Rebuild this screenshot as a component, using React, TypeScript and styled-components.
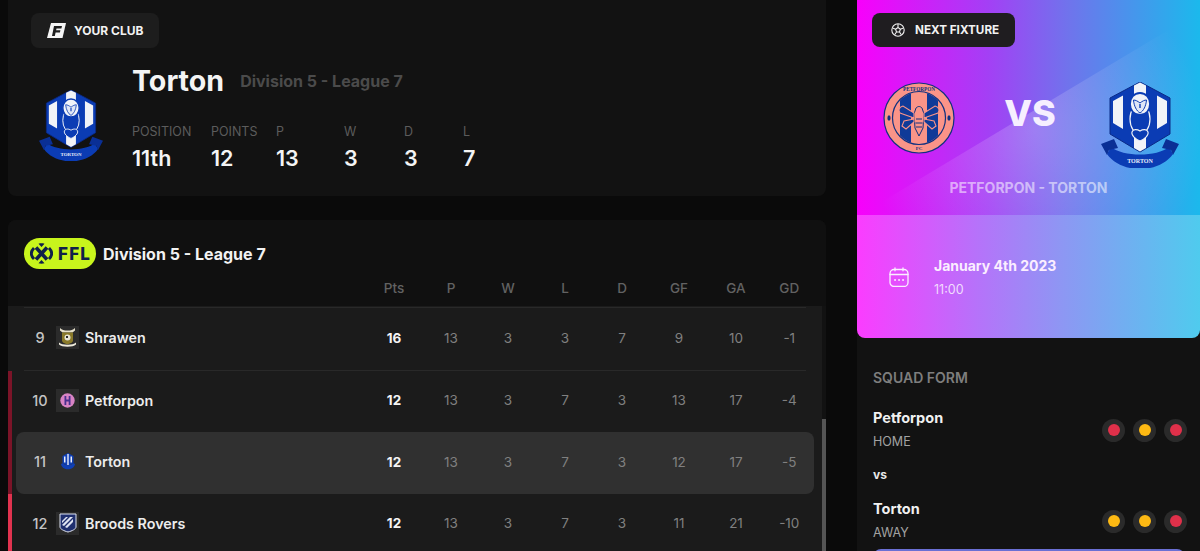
import React from "react";
import styled, { createGlobalStyle } from "styled-components";

const Global = createGlobalStyle`
  html, body { margin: 0; padding: 0; background: #0a0a0a; overflow: hidden; }
  * { box-sizing: border-box; }
  body { font-family: "Inter", "Liberation Sans", sans-serif; }
`;

const Page = styled.div`
  display: flex;
  gap: 31px;
  width: 1200px;
  height: 551px;
  padding-left: 8px;
  overflow: hidden;
  color: #fff;
`;
const Main = styled.main`
  width: 818px;
  display: flex;
  flex-direction: column;
  gap: 24px;
`;
const Side = styled.aside`
  width: 343px;
  display: flex;
  flex-direction: column;
  background: #121212;
`;

const ClubCard = styled.section`
  height: 196px;
  flex: none;
  background: #121212;
  border-radius: 0 0 8px 8px;
  padding: 13px 23px 0;
`;
const Chip = styled.div<{ $dark?: boolean }>`
  display: inline-flex;
  align-items: center;
  height: ${(p) => (p.$dark ? 34 : 35)}px;
  gap: ${(p) => (p.$dark ? 10 : 8)}px;
  padding: ${(p) => (p.$dark ? "0 16px 0 19px" : "0 16px 0 16px")};
  border-radius: 8px;
  background: ${(p) => (p.$dark ? "#1f1d20" : "#1d1d1d")};
  font-size: ${(p) => (p.$dark ? 11.7 : 12)}px;
  font-weight: 700;
  color: #f2f2f2;
`;
const ClubBody = styled.div`
  display: flex;
  margin-top: 15px;
`;
const CrestSlot = styled.div`
  width: 101px;
  padding: 27px 0 0 8px;
  flex: none;
`;
const TitleRow = styled.div`
  display: flex;
  align-items: center;
  gap: 16px;
`;
const ClubName = styled.h1`
  margin: 0;
  font-size: 28.6px;
  line-height: 36px;
  font-weight: 700;
  color: #f4f4f4;
`;
const ClubLeague = styled.span`
  font-size: 16px;
  font-weight: 700;
  color: #4b4b4b;
`;
const Stats = styled.div`
  display: grid;
  grid-template-columns: 79px 65px 68px 60px 59px 40px;
  margin-top: 25px;
`;
const StatLabel = styled.div`
  font-size: 12.5px;
  line-height: 16px;
  color: #5c5c5c;
`;
const StatValue = styled.div`
  margin-top: 4px;
  font-size: 21.5px;
  line-height: 28px;
  font-weight: 600;
  color: #f4f4f4;
`;

const TableCard = styled.section`
  flex: 1;
  min-height: 0;
  background: #121212;
  border-radius: 8px 8px 0 0;
  overflow: hidden;
  display: flex;
  flex-direction: column;
`;
const TableHead = styled.header`
  height: 86px;
  flex: none;
  background: #101010;
  display: flex;
  flex-direction: column;
  padding-top: 18px;
`;
const TitleLine = styled.div`
  display: flex;
  align-items: center;
  gap: 7px;
  padding-left: 16px;
  height: 31px;
  font-size: 16px;
  font-weight: 700;
  color: #f2f2f2;
`;
const Pill = styled.div`
  display: flex;
  align-items: center;
  gap: 5px;
  width: 72px;
  height: 31px;
  padding-left: 6px;
  border-radius: 16px;
  background: #c8f51c;
  color: #10204a;
  font-size: 17px;
  font-weight: 800;
  letter-spacing: 1.2px;
`;
const Grid = styled.div`
  display: grid;
  grid-template-columns: 32px 29px 1fr repeat(7, 57px) 49.5px;
  align-items: center;
  padding-left: 8px;
`;
const HeadGrid = styled(Grid)`
  margin: 9px 12px 0 8px;
  height: 20px;
  font-size: 13.5px;
  font-weight: 500;
  color: #626262;
`;
const Cell = styled.div<{ $strong?: boolean }>`
  text-align: center;
  font-size: 13.5px;
  font-weight: ${(p) => (p.$strong ? 700 : 400)};
  color: ${(p) => (p.$strong ? "#f4f4f4" : "#808080")};
`;
const HeadCell = styled.div`
  text-align: center;
`;
const TableFrame = styled.div`
  flex: 1;
  min-height: 0;
  display: flex;
`;
const Rows = styled.div`
  width: 814px;
  background: #1b1b1b;
  padding-top: 1px;
  overflow: hidden;
`;
const Track = styled.div`
  width: 4px;
  padding-top: 113px;
`;
const Thumb = styled.div`
  height: 140px;
  background: #555;
`;
const Divider = styled.div`
  height: 1px;
  margin: 0 16px;
  background: #292929;
`;
const Zone = styled.div<{ $color: string }>`
  border-left: 4px solid ${(p) => p.$color};
  padding: 0 8px 0 4px;
`;
const Row = styled(Grid)<{ $active?: boolean }>`
  height: 61.5px;
  padding-bottom: 2px;
  border-radius: 8px;
  background: ${(p) => (p.$active ? "#303030" : "transparent")};
`;
const Rank = styled.div`
  text-align: center;
  font-size: 14.5px;
  font-weight: 500;
  color: #c4c4c4;
`;
const LogoTile = styled.div<{ $bare?: boolean }>`
  width: 23px;
  height: 23px;
  background: ${(p) => (p.$bare ? "transparent" : "#2b2b2b")};
  display: flex;
  align-items: center;
  justify-content: center;
`;
const Team = styled.div`
  font-size: 14.3px;
  font-weight: 600;
  color: #ececec;
`;

const Hero = styled.section`
  height: 338px;
  flex: none;
  border-radius: 0 0 8px 8px;
  overflow: hidden;
  display: flex;
  flex-direction: column;
  background: #0a0a0a;
`;
const HeroTop = styled.div`
  height: 215px;
  flex: none;
  position: relative;
  padding: 13px 15px 0;
  background: linear-gradient(90deg, #f800fb 0%, #a43ff5 38%, #6f74ec 62%, #1bb9ec 100%);
`;
const Beam = styled.div`
  position: absolute;
  inset: 0;
  clip-path: polygon(0 217px, 66px 177px, 283px 47px, 343px 11px, 343px 215px);
  background: radial-gradient(circle 170px at 178px 130px, rgba(255, 255, 255, 0.2) 0%, rgba(255, 255, 255, 0.1) 50%, rgba(255, 255, 255, 0) 100%);
`;
const HeroContent = styled.div`
  position: relative;
`;
const Versus = styled.div`
  display: grid;
  grid-template-columns: 72px 1fr 78px;
  align-items: start;
  margin: 35px 6px 0 11px;
  height: 86px;
`;
const VsText = styled.div`
  text-align: center;
  font-size: 36px;
  line-height: 44px;
  font-weight: 800;
  color: #f6efff;
  padding-left: 4px;
  margin-top: 9px;
`;
const Match = styled.div`
  margin-top: 12px;
  text-align: center;
  font-size: 14px;
  line-height: 16px;
  font-weight: 700;
  color: rgba(255, 255, 255, 0.55);
`;
const HeroBottom = styled.div`
  flex: 1;
  display: flex;
  align-items: center;
  gap: 25px;
  padding: 0 0 0 32px;
  background: linear-gradient(90deg, #fb3cff 0%, #b672fa 35%, #8d97f3 60%, #4fcbee 100%);
`;
const DateTitle = styled.div`
  font-size: 14px;
  font-weight: 700;
  color: #fbeeff;
`;
const DateTime = styled.div`
  margin-top: 8px;
  font-size: 12.5px;
  color: rgba(255, 255, 255, 0.78);
`;
const FormPanel = styled.section`
  flex: 1;
  padding: 31px 15px 0 16px;
`;
const FormTitle = styled.div`
  font-size: 14px;
  line-height: 18px;
  font-weight: 600;
  color: #7e7e7e;
`;
const FormRow = styled.div`
  display: flex;
  align-items: center;
  justify-content: space-between;
  margin-top: 20px;
  height: 45px;
`;
const FormTeam = styled.div`
  font-size: 14.5px;
  line-height: 20px;
  font-weight: 700;
  color: #f0f0f0;
`;
const FormSide = styled.div`
  margin-top: 5px;
  font-size: 12.5px;
  line-height: 18px;
  color: #a2a2a2;
`;
const VsLabel = styled.div`
  margin-top: 15px;
  margin-bottom: -5px;
  font-size: 12px;
  line-height: 16px;
  font-weight: 700;
  color: #e8e8e8;
`;
const Dots = styled.div`
  display: flex;
  gap: 8px;
  margin-right: -2px;
  margin-top: 1px;
`;
const Dot = styled.div`
  width: 23px;
  height: 23px;
  border-radius: 50%;
  background: #2a2a2a;
  display: flex;
  align-items: center;
  justify-content: center;
`;
const DotCore = styled.div<{ $color: string }>`
  width: 12px;
  height: 12px;
  border-radius: 50%;
  background: ${(p) => p.$color};
`;
const CtaEdge = styled.div`
  height: 12px;
  margin-top: 6px;
  border-radius: 8px 8px 0 0;
  background: #6a6fd4;
`;

const TortonCrest = ({ w }: { w: number }) => (
  <svg width={w} height={(w * 86) / 78} viewBox="0 0 78 86" aria-hidden="true">
    <path d="M39 0 69 16v36L39 70 9 52V16z" fill="#0b3cb4" stroke="#0a2a86" strokeWidth="1" />
    <path d="M12 19l10-5.500V47l-10-6zM66 19l-10-5.500V47l10-6z" fill="#f1f3f8" />
    <path d="M33 3.500 39 .5l6 3V66l-6 3.500-6-3.500z" fill="#f1f3f8" />
    <ellipse cx="39" cy="37" rx="10" ry="15" fill="#0b3cb4" stroke="#f1f3f8" strokeWidth="1.200" />
    <path d="M29 22c0-6 4-11 10-11s10 5 10 11-4 11-10 11-10-5-10-11z" fill="#f1f3f8" stroke="#0b3cb4" strokeWidth="1.800" />
    <path d="M32.500 18c2 0 4 1 6.500 3 2.500-2 4.500-3 6.500-3-.5 6-3 11-6.500 13-3.500-2-6-7-6.500-13z" fill="#dfe6f6" stroke="#0b3cb4" strokeWidth="1" />
    <path d="M39 22v4" stroke="#0b3cb4" strokeWidth="1.400" />
    <path d="M39 59c-5-2-9-6-8-9 1-3 5-3 8-1 3-2 7-2 8 1 1 3-3 7-8 9z" fill="#0b3cb4" stroke="#f1f3f8" strokeWidth="1.100" />
    <path d="M10 65c12 10 46 10 58 0l4 7C58 92 20 92 6 72z" fill="#0b3cb4" />
    <path d="M0 62 13 57l4 9-9 2-2 5zM78 62 65 57l-4 9 9 2 2 5z" fill="#0a2f95" />
    <text x="39" y="81" textAnchor="middle" fontSize="6" fontWeight="700" fill="#e8ecf8" fontFamily="Liberation Serif, serif">TORTON</text>
  </svg>
);

const PetCrest = () => (
  <svg width="72" height="72" viewBox="0 0 72 72" aria-hidden="true">
    <circle cx="36" cy="36" r="35" fill="#fa9488" stroke="#11317f" strokeWidth="1.200" />
    <circle cx="36" cy="36" r="26.500" fill="#fa9488" stroke="#11317f" strokeWidth="1.200" />
    <path d="M17 18.500A26 26 0 0 1 28 11.300V60.700A26 26 0 0 1 17 53.500zM44 11.300A26 26 0 0 1 55 18.500V53.500A26 26 0 0 1 44 60.700z" fill="#0f3a98" />
    <path d="M33 26c2-2 4-2 6 0l2 6-1 14-4 8-4-8-1-14z" fill="#fa9488" stroke="#11317f" strokeWidth="1" />
    <path d="M33 37h6M32.500 41h7M33 45h6" stroke="#11317f" strokeWidth="1" />
    <path d="M31 31 20 24c-4 1-5 4-3 7l14 5zM41 31l11-7c4 1 5 4 3 7l-14 5zM31 37l-10 2-2 5 4 3 8-7zM41 37l10 2 2 5-4 3-8-7z" fill="#0f3a98" stroke="#fa9488" strokeWidth="1.100" />
    <ellipse cx="6" cy="36" rx="1.600" ry="2.800" fill="#11317f" />
    <ellipse cx="66" cy="36" rx="1.600" ry="2.800" fill="#11317f" />
    <text x="36" y="8.600" textAnchor="middle" fontSize="5.200" fontWeight="700" fill="#11317f" fontFamily="Liberation Serif, serif">PETFORPON</text>
    <text x="36" y="68" textAnchor="middle" fontSize="5" fontWeight="700" fill="#11317f" fontFamily="Liberation Serif, serif">FC</text>
  </svg>
);

const ShrawenMini = () => (
  <svg width="19" height="21" viewBox="0 0 19 21" aria-hidden="true">
    <path d="M2 1c2 2 4 2.500 7.500 2.500S15 3 17 1v2.500l-2.500 2h-10L2 3.500z" fill="#e8e2cc" />
    <path d="M4 5.500h11v8c0 2-3 3-5.500 4C7 16.500 4 15.500 4 13.500z" fill="#8a7a2a" />
    <circle cx="9.500" cy="10.500" r="3" fill="#e9e6d6" />
    <path d="M8 9h2v2H8z" fill="#2a2a2a" />
    <path d="M1 15.500c3 3 14 3 17 0v2c-3 3-14 3-17 0z" fill="#eeeadb" />
  </svg>
);
const PetMini = () => (
  <svg width="15" height="15" viewBox="0 0 15 15" aria-hidden="true">
    <circle cx="7.500" cy="7.500" r="7.200" fill="#d883c4" />
    <path d="M4.500 3h1.800v9H4.500zM8.700 3h1.800v9H8.700z" fill="#4a2f8f" />
    <path d="M5 6.500h5v2H5z" fill="#4a2f8f" />
  </svg>
);
const TortonMini = () => (
  <svg width="14" height="17" viewBox="0 0 14 17" aria-hidden="true">
    <path d="M7 0l5.500 3v7L7 13 1.500 10V3z" fill="#0f3fb5" />
    <path d="M3 3.500h1.500v6H3zM9.500 3.500H11v6H9.500zM6.300 1h1.400v11H6.300z" fill="#e8ecf8" />
    <path d="M0 11l2-1c2 3 8 3 10 0l2 1c-1 7-13 7-14 0z" fill="#0f3fb5" />
  </svg>
);
const BroodsMini = () => (
  <svg width="18" height="20" viewBox="0 0 18 20" aria-hidden="true">
    <path d="M1 1h16v13c0 2-4 4-8 5-4-1-8-3-8-5z" fill="#1f2f6f" stroke="#dfe4f2" strokeWidth="1" />
    <path d="M3 12l8-8h3L5 13zM6 14l8-8v3l-6 6zM3 8l4-4h2L3 10z" fill="#dfe4f2" />
  </svg>
);

const rows = [
  { rank: 9, team: "Shrawen", logo: <ShrawenMini />, pts: 16, v: [13, 3, 3, 7, 9, 10, -1], zone: "transparent" },
  { rank: 10, team: "Petforpon", logo: <PetMini />, pts: 12, v: [13, 3, 7, 3, 13, 17, -4], zone: "#7b1428" },
  { rank: 11, team: "Torton", logo: <TortonMini />, pts: 12, v: [13, 3, 7, 3, 12, 17, -5], zone: "#7b1428", active: true },
  { rank: 12, team: "Broods Rovers", logo: <BroodsMini />, pts: 12, v: [13, 3, 7, 3, 11, 21, -10], zone: "#e0334f" },
];

const stats = [
  ["POSITION", "11th"],
  ["POINTS", "12"],
  ["P", "13"],
  ["W", "3"],
  ["D", "3"],
  ["L", "7"],
];

const RED = "#e0304a";
const YEL = "#fdb913";

export default function App() {
  return (
    <Page>
      <Global />
      <Main>
        <ClubCard>
          <Chip>
            <svg width="19" height="15" viewBox="0 0 19 15" aria-hidden="true">
              <path d="M4 0h15l-3.500 15H0z" fill="#f4f4f4" />
              <path d="M7 3h8l-.6 2.400H9.500l-.4 1.800h4.300L12.900 9.500H8.600L7.800 13H5z" fill="#1d1d1d" />
            </svg>
            YOUR CLUB
          </Chip>
          <ClubBody>
            <CrestSlot>
              <TortonCrest w={64} />
            </CrestSlot>
            <div>
              <TitleRow>
                <ClubName>Torton</ClubName>
                <ClubLeague>Division 5 - League 7</ClubLeague>
              </TitleRow>
              <Stats>
                {stats.map(([l, v]) => (
                  <div key={l}>
                    <StatLabel>{l}</StatLabel>
                    <StatValue>{v}</StatValue>
                  </div>
                ))}
              </Stats>
            </div>
          </ClubBody>
        </ClubCard>

        <TableCard>
          <TableHead>
            <TitleLine>
              <Pill>
                <svg width="23" height="23" viewBox="0 0 23 23" aria-hidden="true" fill="none" stroke="#10204a" strokeLinecap="butt">
                  <path d="M6 5.500 17 17.500M17 5.500 6 17.500" strokeWidth="3.600" />
                  <path d="M4 6C.6 9.500.6 13.500 4 17M19 6c3.400 3.500 3.400 7.500 0 11" strokeWidth="2.800" />
                  <path d="M8.500 1.800c2-.6 4-.6 6 0L11.500 5zM8.500 21.200c2 .6 4 .6 6 0L11.500 18z" fill="#10204a" stroke="none" />
                </svg>
                FFL
              </Pill>
              Division 5 - League 7
            </TitleLine>
            <HeadGrid>
              <span />
              <span />
              <span />
              {["Pts", "P", "W", "L", "D", "GF", "GA", "GD"].map((h) => (
                <HeadCell key={h}>{h}</HeadCell>
              ))}
            </HeadGrid>
          </TableHead>
          <TableFrame>
            <Rows>
              <Divider />
              {rows.map((r, i) => (
                <React.Fragment key={r.rank}>
                  <Zone $color={r.zone}>
                    <Row $active={r.active}>
                      <Rank>{r.rank}</Rank>
                      <LogoTile $bare={r.active}>{r.logo}</LogoTile>
                      <Team>{r.team}</Team>
                      <Cell $strong>{r.pts}</Cell>
                      {r.v.map((n, j) => (
                        <Cell key={j}>{n}</Cell>
                      ))}
                    </Row>
                  </Zone>
                  {i === 0 && <Divider />}
                </React.Fragment>
              ))}
            </Rows>
            <Track>
              <Thumb />
            </Track>
          </TableFrame>
        </TableCard>
      </Main>

      <Side>
        <Hero>
          <HeroTop>
            <Beam />
            <HeroContent>
              <Chip $dark>
                <svg width="14" height="14" viewBox="0 0 14 14" aria-hidden="true" fill="none" stroke="#f2f2f2" strokeWidth="1.100">
                  <circle cx="7" cy="7" r="6.200" />
                  <path d="M7 4.500 9.400 6.200 8.500 9h-3L4.600 6.200zM7 4.500V1M9.400 6.200l3-1.200M8.500 9l1.900 2.800M5.500 9l-1.900 2.800M4.600 6.200 1.600 5" />
                </svg>
                NEXT FIXTURE
              </Chip>
              <Versus>
                <PetCrest />
                <VsText>VS</VsText>
                <TortonCrest w={78} />
              </Versus>
              <Match>PETFORPON - TORTON</Match>
            </HeroContent>
          </HeroTop>
          <HeroBottom>
            <svg width="20" height="20" viewBox="0 0 20 20" fill="none" stroke="#fbeeff" strokeWidth="1.300" strokeLinecap="round" aria-hidden="true">
              <rect x="1" y="2.500" width="18" height="17" rx="4" />
              <path d="M1 7.500h18M6 .8v3M14 .8v3" />
              <path d="M6 13h.1M10 13h.1M14 13h.1" strokeWidth="1.800" />
            </svg>
            <div>
              <DateTitle>January 4th 2023</DateTitle>
              <DateTime>11:00</DateTime>
            </div>
          </HeroBottom>
        </Hero>
        <FormPanel>
          <FormTitle>SQUAD FORM</FormTitle>
          <FormRow>
            <div>
              <FormTeam>Petforpon</FormTeam>
              <FormSide>HOME</FormSide>
            </div>
            <Dots>
              {[RED, YEL, RED].map((c, i) => (
                <Dot key={i}>
                  <DotCore $color={c} />
                </Dot>
              ))}
            </Dots>
          </FormRow>
          <VsLabel>vs</VsLabel>
          <FormRow>
            <div>
              <FormTeam>Torton</FormTeam>
              <FormSide>AWAY</FormSide>
            </div>
            <Dots>
              {[YEL, YEL, RED].map((c, i) => (
                <Dot key={i}>
                  <DotCore $color={c} />
                </Dot>
              ))}
            </Dots>
          </FormRow>
          <CtaEdge />
        </FormPanel>
      </Side>
    </Page>
  );
}
